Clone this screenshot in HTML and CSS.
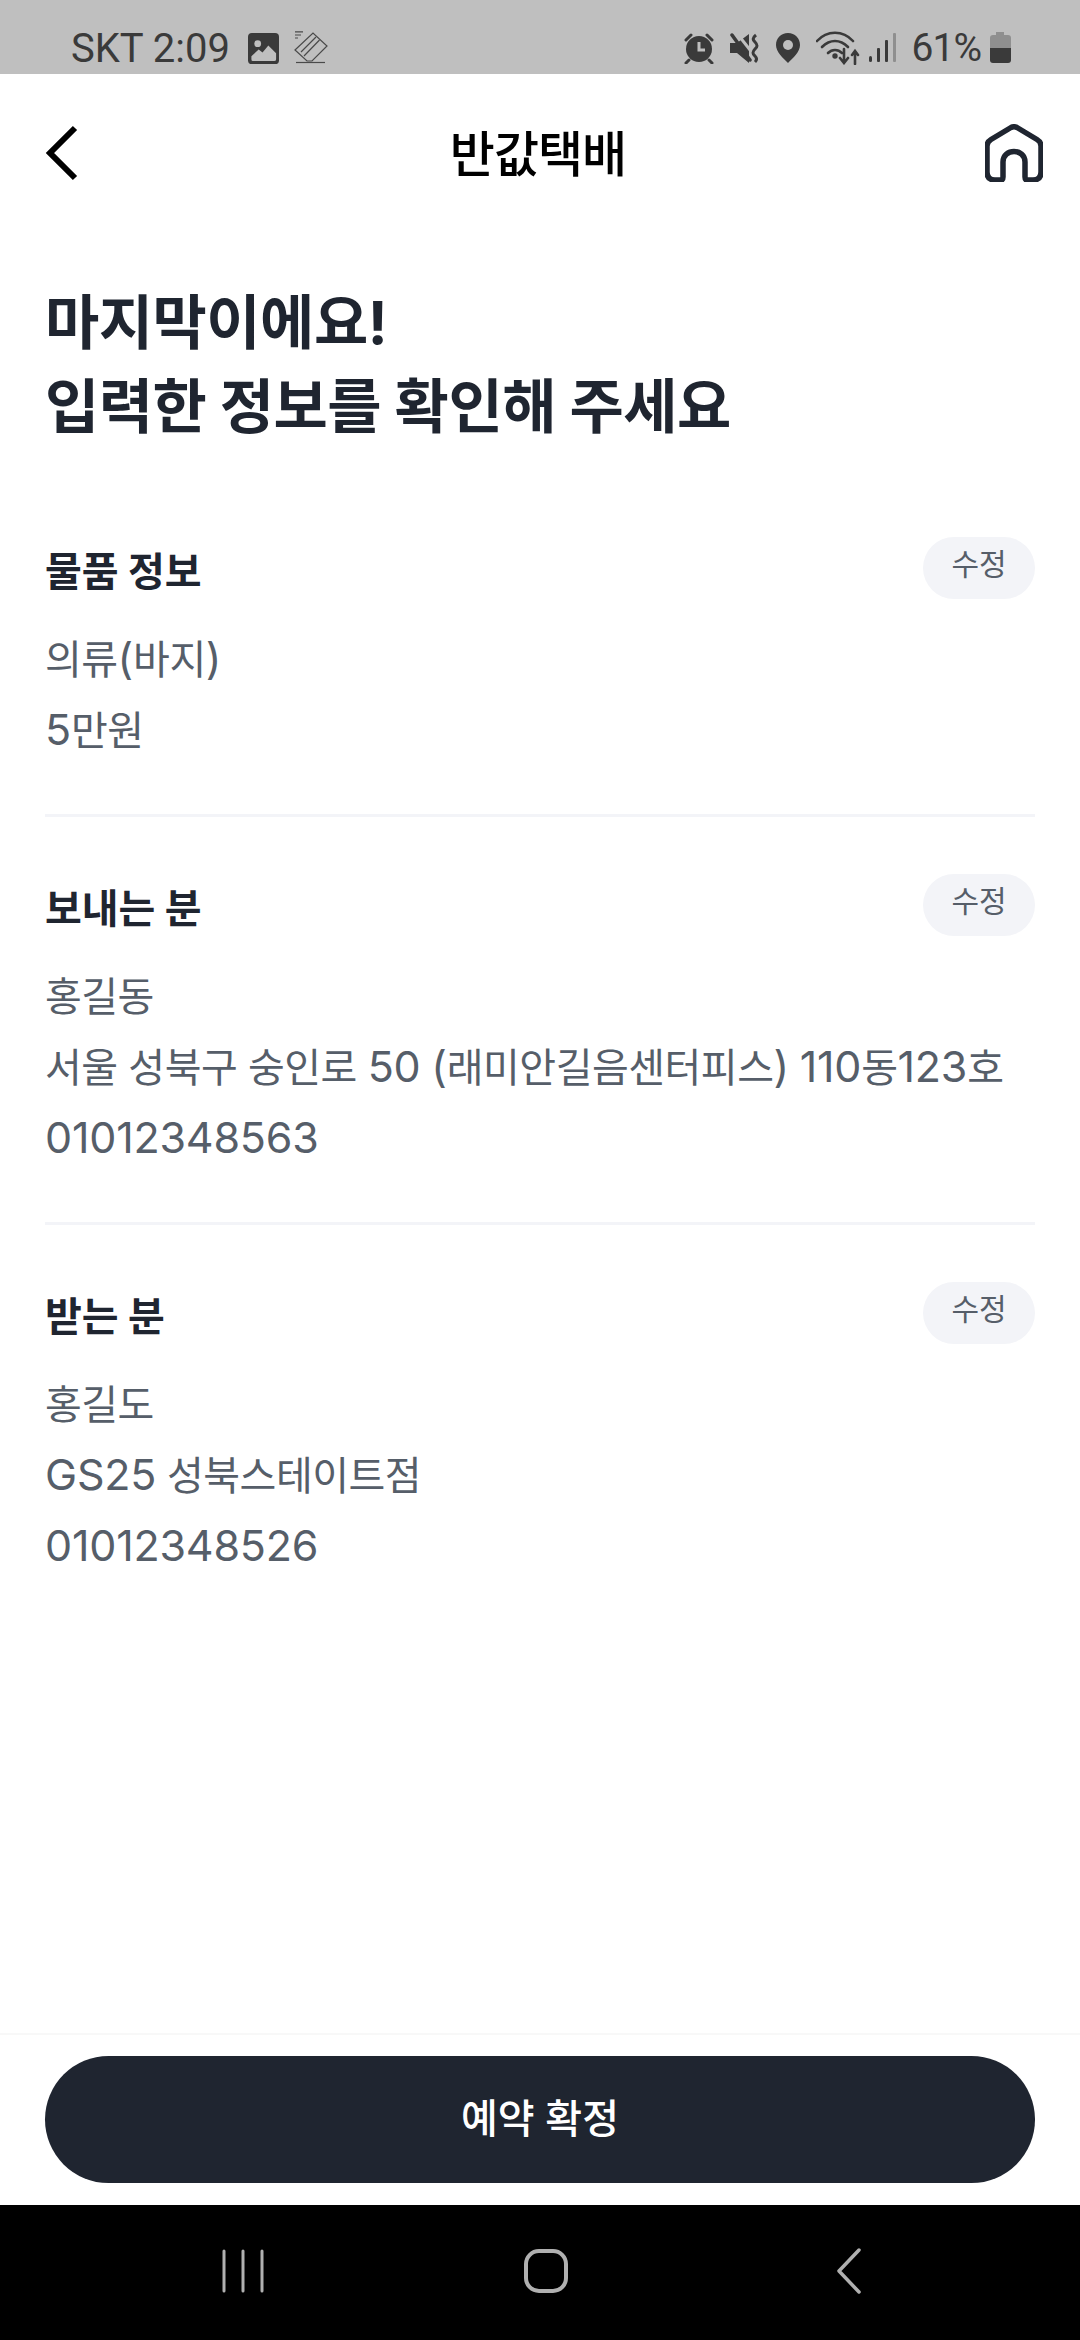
FILE: index.html
```html
<!DOCTYPE html>
<html lang="ko">
<head>
  <meta charset="UTF-8" />
  <meta name="viewport" content="width=device-width, initial-scale=1.0"/>
  <title>반값택배</title>
  <link rel="stylesheet" href="styles.css">
</head>
<body>
  <div class="phone">

    <div class="status-bar">
      <div class="status-left">
        <span class="status-text">SKT 2:09</span>
        <svg class="icon-gallery" width="31" height="31" viewBox="0 0 32 32">
          <rect x="0" y="0" width="32" height="32" rx="4" fill="#3a3a3a"/>
          <circle cx="10" cy="11" r="3.500" fill="#bfbfbf"/>
          <path d="M3.500 27 L3.500 24 L11 17 L15 20 L21 13 L29 21 L29 27 Q29 29 27 29 L5 29 Q3.500 29 3.500 27 Z" fill="#bfbfbf"/>
        </svg>
        <svg class="icon-nfc" width="34" height="34" viewBox="0 0 34 34" fill="none" stroke="#4a4a4a" stroke-width="1.200">
          <path d="M1 0.800H9M1 4H7M1 7H4"/>
          <path d="M1 19 L19 2 L33 15 L18 30 L13 30 Z"/>
          <path d="M7 21 L22 6 M10 25 L25.500 9"/>
          <path d="M2 31.500H31"/>
        </svg>
      </div>
      <div class="status-right">
        <svg class="icon-alarm" width="30" height="32" viewBox="0 0 30 32">
          <circle cx="15" cy="17" r="13" fill="#3a3a3a"/>
          <path d="M15 10V18H21" fill="none" stroke="#bfbfbf" stroke-width="3"/>
          <path d="M2 8 L7 3 M28 8 L23 3 M5 28 L2 31 M25 28 L28 31" stroke="#3a3a3a" stroke-width="3" stroke-linecap="round"/>
        </svg>
        <svg class="icon-mute" width="30" height="32" viewBox="0 0 30 32">
          <path d="M0 11H7L19 2V31L7 21H0Z" fill="#3a3a3a"/>
          <path d="M6 0 L24 23" stroke="#bfbfbf" stroke-width="3"/>
          <path d="M2 3 L20 28" stroke="#3a3a3a" stroke-width="3.500" stroke-linecap="round"/>
          <path d="M26 3 Q21 7 25 10 Q29 14 25 17 Q21 21 25 24 Q28 27 25 30" fill="none" stroke="#3a3a3a" stroke-width="3"/>
        </svg>
        <svg class="icon-pin" width="24" height="32" viewBox="0 0 24 32">
          <path d="M12 1 C5 1 0 6 0 13 C0 20 7 26 12 31 C17 26 24 20 24 13 C24 6 19 1 12 1Z" fill="#3a3a3a"/>
          <circle cx="12" cy="13" r="5" fill="#bfbfbf"/>
        </svg>
        <svg class="icon-wifi" width="44" height="34" viewBox="0 0 44 34" fill="none" stroke="#3a3a3a" stroke-width="2.600" stroke-linecap="round">
          <path d="M1 10 C11 -1 27 -1 37 10"/>
          <path d="M6 16 C14 8 24 8 32 16"/>
          <path d="M12 22 C16 18 22 18 26 22"/>
          <circle cx="19" cy="25" r="1.400" fill="#3a3a3a"/>
          <path d="M28 18V31M24 27L28 32L32 27"/>
          <path d="M39 33V21M36 24L39 20L42 24"/>
        </svg>
        <svg class="icon-signal" width="28" height="32" viewBox="0 0 28 32">
          <rect x="0" y="24" width="3" height="6" rx="1.500" fill="#3a3a3a"/>
          <rect x="8" y="16" width="3" height="14" rx="1" fill="#3a3a3a"/>
          <rect x="16" y="8" width="3" height="22" rx="1" fill="#3a3a3a"/>
          <rect x="24" y="1" width="3" height="29" rx="1" fill="#8f8f8f"/>
        </svg>
        <span class="status-text status-pct">61%</span>
        <svg class="icon-battery" width="21" height="32" viewBox="0 0 21 32">
          <path d="M6 0H14V3H18Q21 3 21 6V16H0V6Q0 3 3 3H6Z" fill="#8f8f8f"/>
          <path d="M0 16H21V28Q21 31 18 31H3Q0 31 0 28Z" fill="#3a3a3a"/>
        </svg>
      </div>
    </div>

    <header class="app-bar">
      <svg class="back-icon" width="34" height="56" viewBox="0 0 34 56" fill="none" stroke="#000" stroke-width="6">
        <path d="M30 3 L5 28 L30 53"/>
      </svg>
      <h1 class="app-title">반값택배</h1>
      <svg class="home-icon" width="58" height="58" viewBox="0 0 58 58" fill="none" stroke="#1f2530" stroke-width="5.500" stroke-linejoin="round">
        <path d="M2 22 Q2 18 6 15.500 L26 3.500 Q29 2 32 3.500 L52 15.500 Q56 18 56 22 V48 Q56 56 48 56 H42 Q40 56 40 53 V38 C40 24 18 24 18 38 V53 Q18 56 16 56 H10 Q2 56 2 48 Z"/>
      </svg>
    </header>

    <main class="content">
      <h2 class="headline">마지막이에요!<br>입력한 정보를 확인해 주세요</h2>

      <section class="info">
        <div class="info-head">
          <h3>물품 정보</h3>
          <button class="edit-btn">수정</button>
        </div>
        <p>의류<span class="num">(</span>바지<span class="num">)</span></p>
        <p><span class="num">5</span>만원</p>
      </section>

      <section class="info">
        <div class="info-head">
          <h3>보내는 분</h3>
          <button class="edit-btn">수정</button>
        </div>
        <p>홍길동</p>
        <p>서울 성북구 숭인로 <span class="num">50</span> <span class="num">(</span>래미안길음센터피스<span class="num">)</span> <span class="num">110</span>동<span class="num">123</span>호</p>
        <p><span class="num">01012348563</span></p>
      </section>

      <section class="info">
        <div class="info-head">
          <h3>받는 분</h3>
          <button class="edit-btn">수정</button>
        </div>
        <p>홍길도</p>
        <p><span class="num">GS25</span> 성북스테이트점</p>
        <p><span class="num">01012348526</span></p>
      </section>
    </main>

    <footer class="bottom">
      <button class="confirm-btn">예약 확정</button>
    </footer>

    <div class="nav-bar">
      <svg width="44" height="44" viewBox="0 0 44 44" stroke="#b0b0b0" stroke-width="3" stroke-linecap="round">
        <path d="M3 2V42M22 2V42M41 2V42"/>
      </svg>
      <svg class="nav-home" width="44" height="44" viewBox="0 0 44 44" fill="none" stroke="#b0b0b0" stroke-width="4">
        <rect x="2" y="2" width="40" height="40" rx="13"/>
      </svg>
      <svg width="26" height="46" viewBox="0 0 26 46" fill="none" stroke="#b0b0b0" stroke-width="3.500" stroke-linecap="round" stroke-linejoin="round">
        <path d="M23 2 L3 23 L23 44"/>
      </svg>
    </div>

  </div>
</body>
</html>
```

FILE: styles.css
```css
* {
  box-sizing: border-box;
}

body {
  margin: 0;
  background: #fff;
  font-family: Inter, "Noto Sans CJK KR", sans-serif;
}

.phone {
  width: 1080px;
  height: 2340px;
  display: flex;
  flex-direction: column;
  overflow: hidden;
}

.status-bar {
  height: 74px;
  flex-shrink: 0;
  background: #bfbfbf;
  display: flex;
  justify-content: space-between;
  align-items: center;
  padding: 22px 69px 0 71px;
  color: #3a3a3a;
}

.status-left,
.status-right {
  display: flex;
  align-items: center;
}

.status-text {
  font-family: Roboto, sans-serif;
  font-size: 40px;
}

.icon-gallery {
  margin-left: 18px;
}

.icon-nfc {
  margin-left: 15px;
}

.icon-mute,
.icon-pin,
.icon-wifi {
  margin-left: 16px;
}

.icon-signal {
  margin-left: 9px;
}

.status-pct {
  margin-left: 15px;
  font-size: 39px;
  letter-spacing: -1px;
}

.icon-battery {
  margin-left: 9px;
}

.app-bar {
  height: 158px;
  flex-shrink: 0;
  display: flex;
  justify-content: space-between;
  align-items: center;
  padding: 0 37px 0 45px;
}

.app-title {
  margin: 0 0 5px 12px;
  font-size: 49px;
  font-weight: 500;
  color: #000;
  letter-spacing: -1px;
}

.content {
  flex: 1;
  padding: 49px 45px 0;
}

.headline {
  margin: 0 0 86px;
  font-size: 59px;
  line-height: 84px;
  font-weight: 700;
  color: #1f2530;
  letter-spacing: -0.5px;
}

.info {
  padding-bottom: 48px;
  margin-bottom: 55px;
  border-bottom: 3px solid #f3f4f8;
}

.info:last-child {
  border-bottom: 0;
}

.info-head {
  display: flex;
  justify-content: space-between;
  align-items: flex-start;
  margin-bottom: 25px;
}

.info-head h3 {
  margin: 12px 0 0;
  font-size: 40px;
  line-height: 50px;
  font-weight: 700;
  color: #1f2530;
}

.info p {
  margin: 0;
  font-size: 40px;
  line-height: 71px;
  color: #565e69;
  letter-spacing: -0.5px;
}

.num {
  font-size: 43px;
  line-height: 1;
  letter-spacing: -0.2px;
}

.edit-btn {
  width: 112px;
  height: 62px;
  margin-top: 2px;
  border: 0;
  border-radius: 31px;
  background: #f3f4f8;
  color: #565e69;
  font-family: inherit;
  font-size: 30px;
  padding: 0 0 12px;
}

.bottom {
  height: 172px;
  flex-shrink: 0;
  padding: 21px 45px;
  border-top: 2px solid #f8f8f8;
}

.confirm-btn {
  width: 100%;
  height: 127px;
  border: 0;
  border-radius: 64px;
  background: #1f2530;
  color: #fff;
  font-family: inherit;
  font-size: 40px;
  font-weight: 500;
  padding: 0 0 8px;
}

.nav-bar {
  height: 135px;
  flex-shrink: 0;
  background: #000;
  display: flex;
  justify-content: space-between;
  align-items: center;
  padding: 0 218px 4px 221px;
}

.nav-home {
  margin-right: 10px;
}
```
